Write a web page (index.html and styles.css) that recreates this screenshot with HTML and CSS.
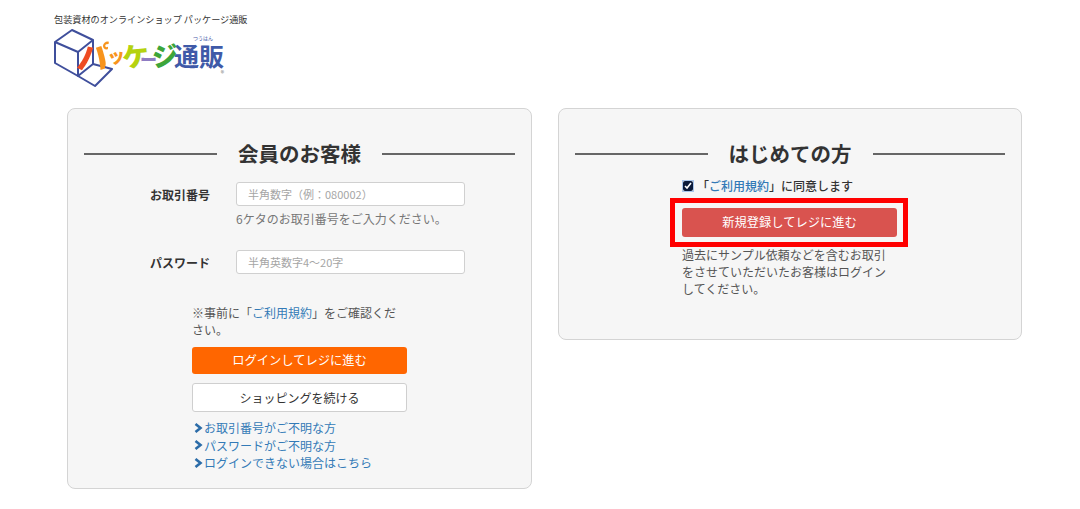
FILE: index.html
```html
<!DOCTYPE html>
<html lang="ja">
<head>
<meta charset="utf-8">
<title>パッケージ通販</title>
<link rel="stylesheet" href="styles.css">
</head>
<body>
<header class="site-header">
  <p class="tagline">包装資材のオンラインショップ パッケージ通販</p>
  <div class="logo">
    <svg class="logo-box" width="60" height="58" viewBox="0 0 60 58" fill="none" stroke="#3f4f9c" stroke-width="2" stroke-linejoin="round">
      <path d="M18 1 L39 11 L39 35 L24 47 L1 34 L1 13 Z"/>
      <path d="M1 13 L24 23 L39 11 M24 23 L24 47 L41 57 L58 40 L39 35"/>
    </svg>
    <div class="logo-word">
      <span class="g g-pa">パ</span><span class="g g-tsu">ッ</span><span class="g g-ke">ケ</span><span class="g g-bar">ー</span><span class="g g-ji">ジ</span><span class="g g-tsuhan">通販</span>
      <span class="ruby">つうはん</span>
      <span class="reg">®</span>
    </div>
  </div>
</header>
<main class="cards">
  <section class="card card-member">
    <h2 class="card-title"><span>会員のお客様</span></h2>
    <div class="field">
      <label class="field-label">お取引番号</label>
      <div class="field-body">
        <input class="text-input" type="text" placeholder="半角数字（例：080002）">
        <p class="hint">6ケタのお取引番号をご入力ください。</p>
      </div>
    </div>
    <div class="field field-pass">
      <label class="field-label">パスワード</label>
      <div class="field-body">
        <input class="text-input" type="text" placeholder="半角英数字4～20字">
      </div>
    </div>
    <div class="actions">
      <p class="note">※事前に「<a href="#">ご利用規約</a>」をご確認ください。</p>
      <a class="btn btn-orange" href="#">ログインしてレジに進む</a>
      <a class="btn btn-white" href="#">ショッピングを続ける</a>
      <ul class="links">
        <li><svg class="chev" width="9" height="10" viewBox="0 0 9 10"><path d="M1.5 1 L6.5 5 L1.5 9" fill="none" stroke="#2b6ca8" stroke-width="2.6"/></svg><a href="#">お取引番号がご不明な方</a></li>
        <li><svg class="chev" width="9" height="10" viewBox="0 0 9 10"><path d="M1.5 1 L6.5 5 L1.5 9" fill="none" stroke="#2b6ca8" stroke-width="2.6"/></svg><a href="#">パスワードがご不明な方</a></li>
        <li><svg class="chev" width="9" height="10" viewBox="0 0 9 10"><path d="M1.5 1 L6.5 5 L1.5 9" fill="none" stroke="#2b6ca8" stroke-width="2.6"/></svg><a href="#">ログインできない場合はこちら</a></li>
      </ul>
    </div>
  </section>
  <section class="card card-new">
    <h2 class="card-title"><span>はじめての方</span></h2>
    <div class="new-body">
      <label class="agree"><input class="check" type="checkbox" checked>「<a href="#">ご利用規約</a>」に同意します</label>
      <div class="highlight"><a class="btn btn-red" href="#">新規登録してレジに進む</a></div>
      <p class="new-note">過去にサンプル依頼などを含むお取引をさせていただいたお客様はログインしてください。</p>
    </div>
  </section>
</main>
</body>
</html>
```
FILE: styles.css
```css
* { box-sizing: border-box; }
html, body { margin: 0; padding: 0; }
body {
  background: #fff;
  color: #333;
  font-family: "Noto Sans CJK JP", "Noto Sans", sans-serif;
  font-size: 12px;
  height: 509px;
  overflow: hidden;
}
a { color: #337ab7; text-decoration: none; }
p { margin: 0; }

.site-header { padding: 12px 0 0 54px; height: 108px; }
.tagline { font-size: 9.15px; line-height: 14px; color: #333; }
.logo { display: flex; align-items: flex-start; margin-top: 3px; }
.logo-box { flex: none; }
.logo-word {
  position: relative;
  display: flex;
  align-items: center;
  flex: none;
  margin: 7px 0 0 -36px;
  height: 38px;
  width: 146px;
  font-weight: 900;
  line-height: 1;
  white-space: nowrap;
}
.g { display: block; flex: none; text-align: center; }
.g-pa {
  width: 29px;
  font-size: 32px;
  background: linear-gradient(90deg, #ee4b23 48%, #f7941d 48%);
  -webkit-background-clip: text;
  background-clip: text;
  color: transparent;
  transform: skewX(-8deg);
}
.g-tsu { width: 15px; font-size: 18px; color: #f7941d; transform: rotate(-10deg); }
.g-ke { width: 18px; font-size: 27px; color: #b5d20f; transform: rotate(-6deg); }
.g-bar { width: 12px; font-size: 17px; color: #8e7cc3; margin-top: 6px; }
.g-ji { width: 22px; font-size: 26px; color: #3da53a; transform: rotate(-6deg); }
.g-tsuhan { width: 50px; font-size: 25px; letter-spacing: 0; font-weight: 700; color: #3f5aa8; margin-top: 0; }
.ruby { position: absolute; top: -1px; right: 11px; font-size: 5px; font-weight: 400; color: #3f5aa8; }
.reg { position: absolute; right: 0; bottom: -3px; font-size: 7px; font-weight: 400; color: #777; }

.cards { display: flex; align-items: flex-start; gap: 26px; padding-left: 67px; }
.card {
  background: #f6f6f6;
  border: 1px solid #d4d4d4;
  border-radius: 8px;
  padding: 28px 16px 0;
}
.card-member { width: 465px; height: 381px; }
.card-new { width: 464px; height: 232px; }

.card-title {
  display: flex;
  align-items: center;
  gap: 21px;
  margin: 0;
  font-size: 20.5px;
  font-weight: 700;
  line-height: 32px;
  height: 32px;
  color: #333;
}
.card-title::before, .card-title::after {
  content: "";
  flex: 1;
  height: 2px;
  margin-top: 2px;
  background: #666;
}

.field { display: flex; align-items: flex-start; margin-top: 13px; }
.field-pass { margin-top: 22px; }
.field-label {
  width: 126px;
  padding-top: 4px;
  text-align: right;
  font-size: 12px;
  line-height: 18px;
  font-weight: 700;
  color: #333;
}
.field-body { margin-left: 26px; }
.text-input {
  display: block;
  width: 229px;
  height: 24px;
  padding: 0 11px;
  background: #fff;
  border: 1px solid #d0d0d0;
  border-radius: 3px;
  font: 11px "Noto Sans CJK JP", sans-serif;
  outline: 0;
}
.text-input::placeholder { color: #a5a5a5; opacity: 1; }
.hint { font-size: 12px; line-height: 18px; margin-top: 4px; color: #777; white-space: nowrap; }

.actions { width: 215px; margin: 30px 0 0 108px; }
.note { font-size: 12px; line-height: 17px; color: #555; }
.btn {
  display: block;
  width: 215px;
  text-align: center;
  font-size: 12px;
  border-radius: 3px;
}
.btn-orange { height: 27px; line-height: 27px; margin-top: 9px; font-size: 12.25px; background: #ff6600; color: #fff; }
.btn-white { height: 29px; line-height: 27px; margin-top: 9px; background: #fff; border: 1px solid #cfcfcf; color: #333; }
.links { list-style: none; margin: 7px 0 0; padding: 0 0 0 2px; }
.links li { display: flex; align-items: center; height: 17.5px; font-size: 12px; line-height: 17.5px; }
.chev { flex: none; margin-right: 1px; }

.new-body { width: 215px; margin: 8px 0 0 107px; }
.agree { display: flex; align-items: center; height: 18px; font-size: 12px; line-height: 18px; font-weight: 500; white-space: nowrap; }
.check { width: 10px; height: 10px; margin: 0 4px 0 1px; flex: none; accent-color: #0a1a3a; box-shadow: 0 0 0 1px #a9c6ec; border-radius: 2px; }
.highlight { position: relative; margin-top: 13px; }
.highlight::after {
  content: "";
  position: absolute;
  inset: -10px -11px -10px -12px;
  border: 5px solid #f00;
  pointer-events: none;
}
.btn-red { height: 29px; line-height: 29px; background: #d9534f; color: #fff; font-size: 12.25px; }
.new-note { font-size: 12px; line-height: 17px; color: #555; margin-top: 9px; }
```
